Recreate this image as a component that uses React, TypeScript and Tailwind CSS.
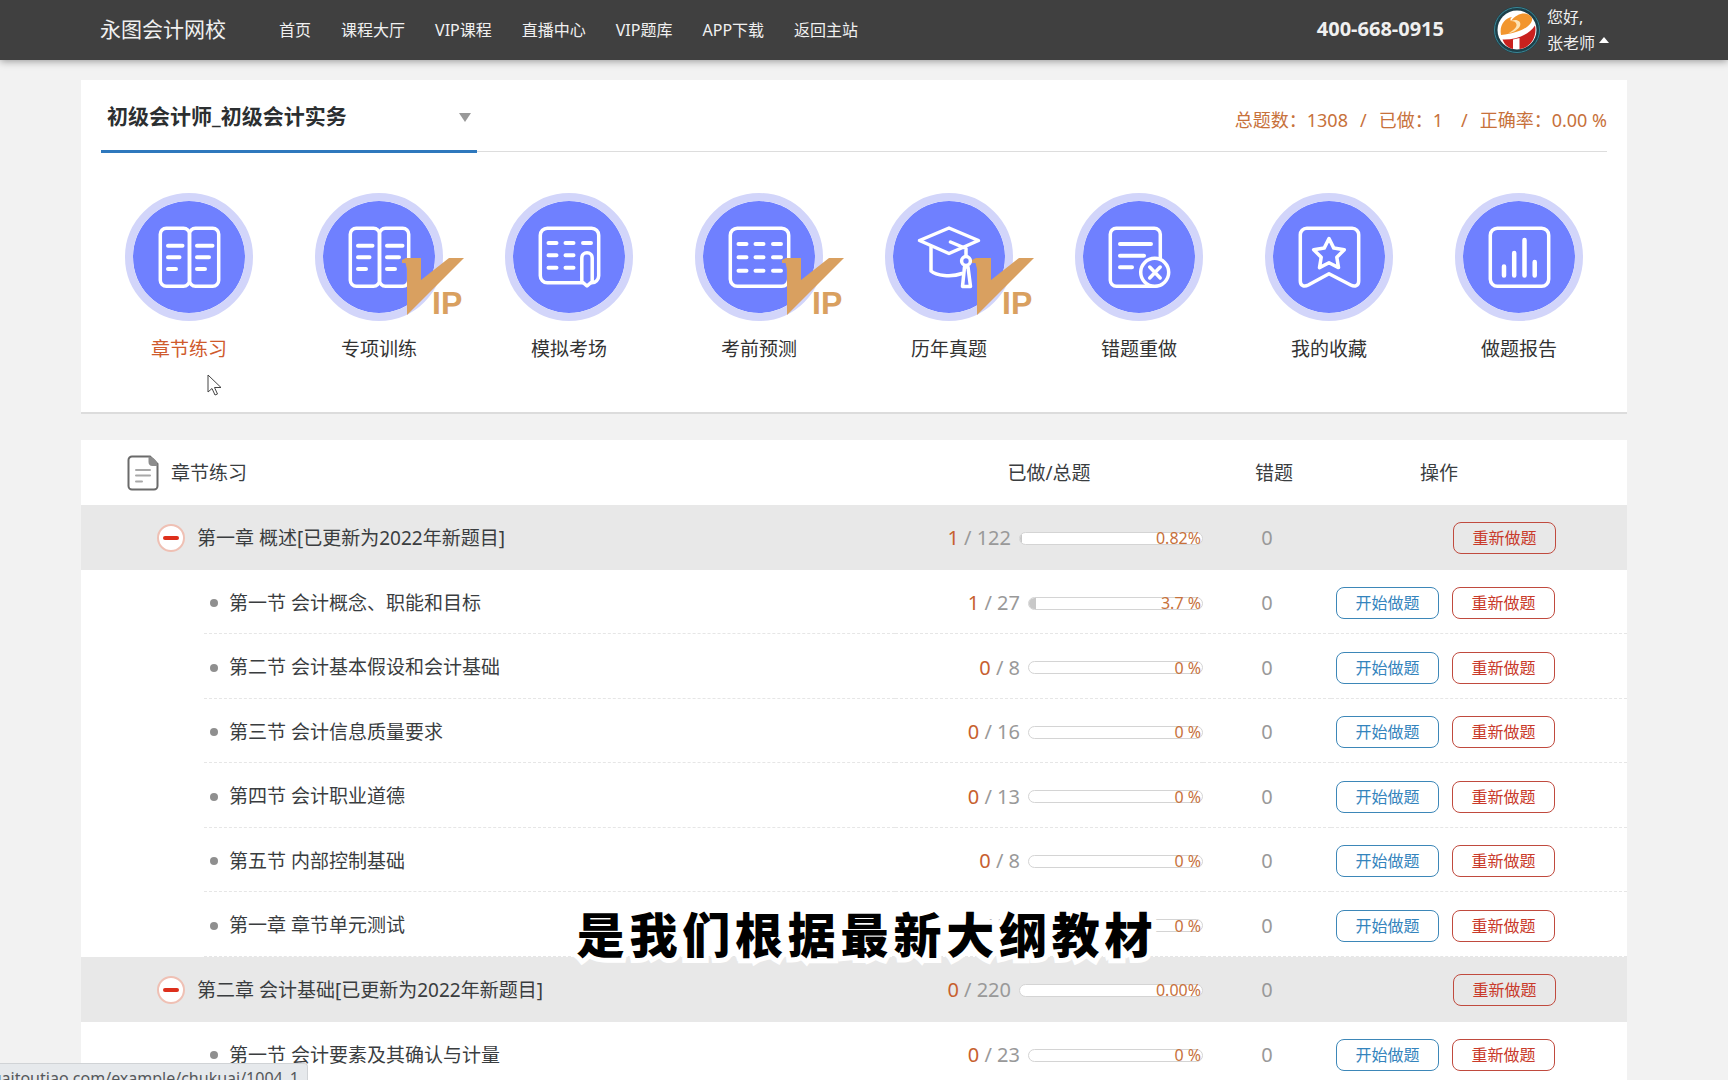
import type { ReactNode } from "react";

const NAV = ["首页", "课程大厅", "VIP课程", "直播中心", "VIP题库", "APP下载", "返回主站"];

const BookIcon = (
  <>
    <rect x="35.3" y="35.3" width="29.2" height="58" rx="6" />
    <rect x="64.5" y="35.3" width="29.2" height="58" rx="6" />
    <path strokeWidth="4" d="M43 52.7h14.500M43 64.300h11.500M43 76h8M72 52.700h15.500M72 64.300h12M72 76h8" />
  </>
);

const ExamIcon = (
  <>
    <rect x="35.3" y="35.3" width="58.4" height="54.4" rx="7" />
    <path strokeWidth="4" d="M43.500 50h8M60.500 50h8M78 50h8M43.500 62.300h8M60.500 62.300h8M43.500 74.700h8M60.500 74.700h8" />
    <path fill="#6f80ff" d="M76.800 65a5.200 5.200 0 0 1 10.400 0v23.500L82 93l-5.200-4.500z" />
  </>
);

const GridIcon = (
  <>
    <rect x="35.3" y="35.3" width="58.4" height="58" rx="7" />
    <path strokeWidth="4" d="M43.500 51h8M60.500 51h8M78 51h8M43.500 64.300h8M60.500 64.300h8M78 64.300h8M43.500 77.700h8M60.500 77.700h8M78 77.700h8" />
  </>
);

const CapIcon = (
  <>
    <path d="M34.500 47.500L64 35l29.500 12.500L64 60.500z" />
    <path d="M46 54v24c5 4.500 20 6.500 31 2.500M65.500 49L81 55.500V63" />
    <circle cx="81" cy="68" r="4.400" />
    <path d="M79.500 74l-2 19.500h8L83 74z" />
  </>
);

const WrongIcon = (
  <>
    <rect x="35.3" y="35.3" width="50" height="58" rx="6" />
    <path strokeWidth="4" d="M45 51h31M45 62.700h24M45 74.300h12" />
    <circle cx="79.700" cy="79.300" r="14" fill="#6f80ff" />
    <path d="M74.700 74l10.500 11M85.200 74L74.700 85" />
  </>
);

const FavouriteIcon = (
  <>
    <path d="M35.300 42a6.500 6.500 0 0 1 6.500-6.700h45.400a6.500 6.500 0 0 1 6.500 6.700v46c0 5-4 6-8 4L64 80.700 43.300 92c-4 2-8 1-8-4z" />
    <path d="M64 45.500l4.800 9.600 10.500 1.600-7.500 7.500 1.700 10.400L64 69.800l-9.500 4.800 1.700-10.400-7.500-7.500 10.500-1.600z" />
  </>
);

const ReportIcon = (
  <>
    <rect x="35.3" y="35.3" width="58.4" height="58" rx="7" />
    <path strokeWidth="4.500" d="M49 73.500v9M59.200 60v22.500M69.500 47v35.500M79.700 69v13.500" />
  </>
);

type Feature = { label: string; icon: ReactNode; vip?: boolean; active?: boolean };

const FEATURES: Feature[] = [
  { label: "章节练习", icon: BookIcon, active: true },
  { label: "专项训练", icon: BookIcon, vip: true },
  { label: "模拟考场", icon: ExamIcon },
  { label: "考前预测", icon: GridIcon, vip: true },
  { label: "历年真题", icon: CapIcon, vip: true },
  { label: "错题重做", icon: WrongIcon },
  { label: "我的收藏", icon: FavouriteIcon },
  { label: "做题报告", icon: ReportIcon },
];

type Section = { title: string; done: number; total: number; rate: string; percent: number };
type Chapter = Section & { sections: Section[] };

const CHAPTERS: Chapter[] = [
  {
    title: "第一章 概述[已更新为2022年新题目]",
    done: 1,
    total: 122,
    rate: "0.82%",
    percent: 1,
    sections: [
      { title: "第一节 会计概念、职能和目标", done: 1, total: 27, rate: "3.7 %", percent: 4 },
      { title: "第二节 会计基本假设和会计基础", done: 0, total: 8, rate: "0 %", percent: 0 },
      { title: "第三节 会计信息质量要求", done: 0, total: 16, rate: "0 %", percent: 0 },
      { title: "第四节 会计职业道德", done: 0, total: 13, rate: "0 %", percent: 0 },
      { title: "第五节 内部控制基础", done: 0, total: 8, rate: "0 %", percent: 0 },
      { title: "第一章 章节单元测试", done: 0, total: 50, rate: "0 %", percent: 0 },
    ],
  },
  {
    title: "第二章 会计基础[已更新为2022年新题目]",
    done: 0,
    total: 220,
    rate: "0.00%",
    percent: 0,
    sections: [{ title: "第一节 会计要素及其确认与计量", done: 0, total: 23, rate: "0 %", percent: 0 }],
  },
];

function Avatar() {
  return (
    <svg viewBox="0 0 48 48" className="size-12" aria-hidden="true">
      <circle cx="24" cy="24" r="23.500" fill="#1d3f49" />
      <circle cx="24" cy="24" r="22.500" fill="none" stroke="#3b8796" strokeWidth="1" />
      <circle cx="24" cy="24" r="19.500" fill="#fff" />
      <path d="M8 29C6 19 12 12 19 11c-1.500 1.500-2 2.500-1 4C24 6 36 5 39 12c1.500 6-9 15-31 17z" fill="#f2962e" />
      <path d="M18 15c5-2.500 11 0 9 5-2 4-7 6.500-12 7.500 5-3 9-6 8.500-9-.3-2.500-2.500-3.500-5.500-3.500z" fill="#fde3b4" />
      <path d="M9.500 33.500C21 34 35 30 42 19.500 44.500 31 37 42 26.500 43V32l-6.500 1.500V43c-5-1-8.500-4.500-10.500-9.500z" fill="#c9211e" />
    </svg>
  );
}

function VipMark() {
  return (
    <svg viewBox="0 0 64 60" className="absolute left-[86px] top-[64px] h-[60px] w-16 overflow-visible" aria-hidden="true">
      <path d="M1 3l4-2h15v22L48 1h15L6 58V12L4.500 6H1z" fill="#d9a060" />
      <text x="31" y="57" fontSize="32" fontWeight="700" fill="#d9a060" className="font-['Liberation_Sans',sans-serif]">
        IP
      </text>
    </svg>
  );
}

function Header() {
  return (
    <header className="relative flex h-[60px] items-center bg-[#404040] pl-[100px] pr-[119px] text-[#f0f0f0] shadow-[0_1px_8px_rgba(0,0,0,0.4)]">
      <a href="#" className="text-[21px]">永图会计网校</a>
      <nav className="ml-[53px] flex gap-[30px] text-base">
        {NAV.map((item) => (
          <a key={item} href="#">{item}</a>
        ))}
      </nav>
      <span className="ml-auto pb-0.5 text-xl font-bold">400-668-0915</span>
      <button type="button" className="ml-[49px] flex items-center gap-1.5 text-left text-base">
        <Avatar />
        <span className="leading-[26px]">
          <span className="block">您好,</span>
          <span className="flex items-center gap-1">
            张老师
            <svg viewBox="0 0 10 6" className="mb-1.5 h-1.5 w-2.5" aria-hidden="true">
              <path d="M5 0l5 6H0z" fill="#fff" />
            </svg>
          </span>
        </span>
      </button>
    </header>
  );
}

function Overview() {
  return (
    <section className="border-b-2 border-[#dcdcdc] bg-white pb-12">
      <div className="mx-5 flex h-[72px] items-stretch justify-between border-b border-[#ddd]">
        <div className="relative -mb-0.5 flex w-[376px] items-center border-b-3 border-[#2e78bd] pt-1">
          <select
            aria-label="课程"
            className="w-full appearance-none bg-transparent pl-1.5 text-[21px] font-bold text-[#2c2f31] outline-none"
          >
            <option>初级会计师_初级会计实务</option>
          </select>
          <svg viewBox="0 0 12 9" className="pointer-events-none absolute right-1.5 h-[9px] w-3" aria-hidden="true">
            <path d="M0 0h12L6 9z" fill="#999" />
          </svg>
        </div>
        <p className="flex items-center gap-3 pt-2 text-lg text-[#c7713b]">
          <span>总题数：1308</span>
          <span>/</span>
          <span>已做：1</span>
          <span className="ml-1.5">/</span>
          <span>正确率：0.00 %</span>
        </p>
      </div>
      <div className="mx-[13px] mt-[41px] grid grid-cols-8">
        {FEATURES.map((f) => (
          <a key={f.label} href="#" className="flex flex-col items-center gap-3.5">
            <span className="relative size-32 rounded-full border-8 border-[#d2d5fa] bg-[#6f80ff] bg-clip-padding">
              <svg
                viewBox="8 8 112 112"
                className="size-28"
                fill="none"
                stroke="#fff"
                strokeWidth="3.500"
                strokeLinecap="round"
                strokeLinejoin="round"
                aria-hidden="true"
              >
                {f.icon}
              </svg>
              <span className="absolute -left-2 -top-2">{f.vip && <VipMark />}</span>
            </span>
            <span className={f.active ? "text-[19px] text-[#cf5a2c]" : "text-[19px] text-[#333]"}>{f.label}</span>
          </a>
        ))}
      </div>
    </section>
  );
}

function Progress({ row, wide }: { row: Section; wide?: boolean }) {
  return (
    <div className="flex items-center justify-end gap-2">
      <span className="text-xl text-[#999]">
        <span className="text-[#c7602f]">{row.done}</span> / {row.total}
      </span>
      <span
        className={
          wide
            ? "relative h-[13px] w-[184px] rounded-full border border-[#d4d4d4] bg-white"
            : "relative h-[13px] w-[175px] rounded-full border border-[#d4d4d4] bg-white"
        }
      >
        <span className="block h-full overflow-hidden rounded-full">
          <span className="block h-full bg-[#c8c8c8]" style={{ width: `${row.percent}%` }} />
        </span>
        <span className="absolute inset-y-0 right-px flex items-center text-base text-[#c7713b]">{row.rate}</span>
      </span>
    </div>
  );
}

function ActionButton({ children, tone }: { children: string; tone: "blue" | "red" }) {
  return (
    <button
      type="button"
      className={
        tone === "blue"
          ? "h-8 w-[103px] rounded-lg border border-[#3d87b8] text-base text-[#3484bd]"
          : "h-8 w-[103px] rounded-lg border border-[#c04a3e] text-base text-[#c93a2a]"
      }
    >
      {children}
    </button>
  );
}

function ChapterGroup({ chapter }: { chapter: Chapter }) {
  return (
    <tbody>
      <tr className="h-[65px] bg-[#e8e8e8]">
        <td className="pl-[76px] pt-0.5">
          <div className="flex items-center gap-3">
            <button
              type="button"
              aria-label="收起"
              className="flex size-7 items-center justify-center rounded-full border-2 border-[#efc0b4] bg-white"
            >
              <span className="h-1 w-4 rounded-full bg-[#dd2f1c]" />
            </button>
            {chapter.title}
          </div>
        </td>
        <td className="pt-0.5"><Progress row={chapter} wide /></td>
        <td className="pt-0.5 text-center text-xl text-[#999]">0</td>
        <td className="pr-[71px] pt-0.5 text-right"><ActionButton tone="red">重新做题</ActionButton></td>
      </tr>
      {chapter.sections.map((s, i) => (
        <tr key={s.title} className={i % 2 ? "h-[65px]" : "h-16"}>
          <td className="pl-[123px]">
            <div
              className={
                i % 2
                  ? "flex h-[65px] items-center gap-[11px] border-b border-dashed border-[#e6e6e6] pl-1.5 pt-1"
                  : "flex h-16 items-center gap-[11px] border-b border-dashed border-[#e6e6e6] pl-1.5 pt-1"
              }
            >
              <span className="size-2 rounded-full bg-[#8f8f8f]" />
              {s.title}
            </div>
          </td>
          <td className="border-b border-dashed border-[#e6e6e6] pt-1"><Progress row={s} /></td>
          <td className="border-b border-dashed border-[#e6e6e6] pt-1 text-center text-xl text-[#999]">0</td>
          <td className="border-b border-dashed border-[#e6e6e6] pr-[72px] pt-1">
            <div className="flex justify-end gap-[13px]">
              <ActionButton tone="blue">开始做题</ActionButton>
              <ActionButton tone="red">重新做题</ActionButton>
            </div>
          </td>
        </tr>
      ))}
    </tbody>
  );
}

function ChapterTable() {
  return (
    <table className="mt-[26px] w-full table-fixed border-separate border-spacing-0 bg-white text-[19px] text-[#3a3d3f]">
      <colgroup>
        <col />
        <col className="w-[308px]" />
        <col className="w-32" />
        <col className="w-[296px]" />
      </colgroup>
      <thead>
        <tr className="h-[65px]">
          <th className="pl-[46px] pt-0.5 text-left font-normal">
            <span className="flex items-center gap-3">
              <svg viewBox="0 0 32 36" className="h-9 w-8" fill="none" aria-hidden="true">
                <path d="M6 1.500h17L30.500 9v22a3.500 3.500 0 0 1-3.500 3.500H5A3.500 3.500 0 0 1 1.500 31V5A3.500 3.500 0 0 1 5 1.500z" stroke="#6a6a6a" strokeWidth="2" />
                <path d="M21.500 1.500c5 .5 9 4 9 9.500h-5c-3 0-4-2-4-4z" fill="#8c8c8c" />
                <path d="M9 15h14M9 20.500h14M9 26.500h6" stroke="#a8a8a8" strokeWidth="2" strokeLinecap="round" />
              </svg>
              章节练习
            </span>
          </th>
          <th className="pt-0.5 font-normal">已做/总题</th>
          <th className="pl-3.5 pt-0.5 font-normal">错题</th>
          <th className="pr-20 pt-0.5 font-normal">操作</th>
        </tr>
      </thead>
      {CHAPTERS.map((c) => (
        <ChapterGroup key={c.title} chapter={c} />
      ))}
    </table>
  );
}

export default function App() {
  return (
    <div className="relative h-screen overflow-hidden bg-[#f2f2f2] font-['Noto_Sans','Noto_Sans_CJK_SC',sans-serif]">
      <Header />
      <main className="pl-[81px] pr-[101px] pt-5">
        <Overview />
        <ChapterTable />
      </main>
      <svg viewBox="0 0 16 22" className="absolute left-[207px] top-[374px] h-[22px] w-4" aria-hidden="true">
        <path d="M1 1v17l4-3.500 3 6.500 2.500-1-3-6.500H14z" fill="#fff" stroke="#444" strokeWidth="1" />
      </svg>
      <p className="absolute inset-x-0 bottom-[124px] pl-1.5 text-center font-['Noto_Sans_CJK_SC',sans-serif] text-5xl font-black tracking-widest text-black [-webkit-text-stroke:10px_white] [paint-order:stroke_fill]">
        是我们根据最新大纲教材
      </p>
      <div className="absolute bottom-0 left-0 flex h-[17px] w-[308px] items-start justify-end overflow-hidden rounded-tr-sm border-r border-t border-[#d0d3d6] bg-[#e6e9ec] pr-2 pt-0.5 text-base text-[#55585b]">
        uaitoutiao.com/example/chukuai/1004_1
      </div>
    </div>
  );
}
